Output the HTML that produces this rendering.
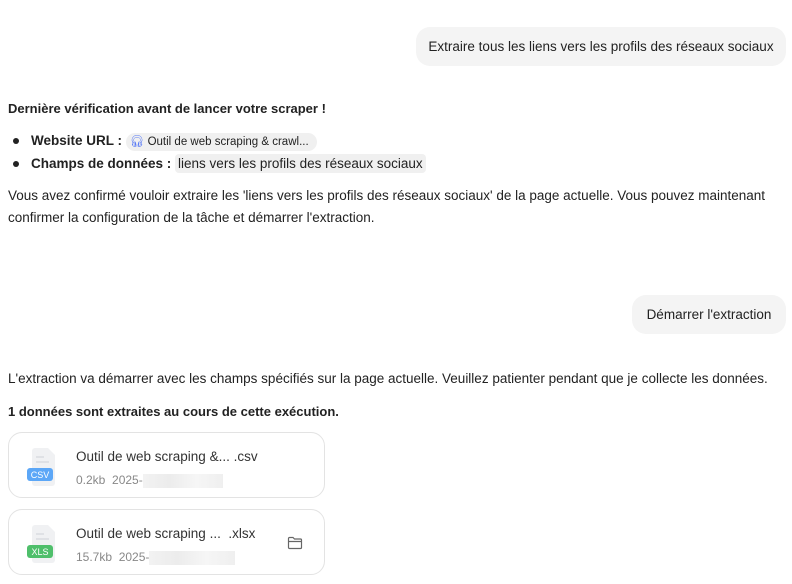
<!DOCTYPE html>
<html><head><meta charset="utf-8"><style>
body{margin:0;width:792px;height:584px;background:#fff;font-family:"Liberation Sans",sans-serif;font-size:13.5px;color:#222;position:relative;overflow:hidden}
.ab{position:absolute;white-space:nowrap}
.bub{background:#f4f4f4;border-radius:14px;height:39px;line-height:39px;padding:0 12px;box-sizing:border-box;text-align:center}
.dot{position:absolute;width:6px;height:6px;border-radius:50%;background:#222}
.tag{background:#f0f0f0;border-radius:10px;padding:2px 6px}
.card{position:absolute;left:8px;width:317px;height:66px;border:1px solid #e3e3e3;border-radius:14px;box-sizing:border-box}
.blur{display:inline-block;width:80px;height:14px;background:linear-gradient(90deg,#f2f2f2,#ececec,#f6f6f6,#efefef);vertical-align:middle}
</style></head><body>
<div class="ab bub" style="left:416px;top:27px;width:370px">Extraire tous les liens vers les profils des réseaux sociaux</div>
<div class="ab" style="left:8px;top:101px;font-weight:bold;font-size:13px">Dernière vérification avant de lancer votre scraper !</div>
<div class="dot" style="left:13px;top:138px"></div>
<div class="ab" style="left:31px;top:131px;line-height:20px"><b>Website URL :</b> <span class="tag" style="font-size:11.5px;padding:3px 8px 3px 4px"><span style="color:#5b7cf5">&#x1F3A7;&#xFE0E;</span> Outil de web scraping &amp; crawl...</span></div>
<div class="dot" style="left:13px;top:161px"></div>
<div class="ab" style="left:31px;top:154px;line-height:20px"><b>Champs de données :</b> <span class="tag" style="border-radius:4px;padding:2px 3px">liens vers les profils des réseaux sociaux</span></div>
<div class="ab" style="left:8px;top:185px;line-height:22px">Vous avez confirmé vouloir extraire les 'liens vers les profils des réseaux sociaux' de la page actuelle. Vous pouvez maintenant<br>confirmer la configuration de la tâche et démarrer l'extraction.</div>
<div class="ab bub" style="left:632px;top:295px;width:154px">Démarrer l'extraction</div>
<div class="ab" style="left:8px;top:371px">L'extraction va démarrer avec les champs spécifiés sur la page actuelle. Veuillez patienter pendant que je collecte les données.</div>
<div class="ab" style="left:8px;top:404px;font-weight:bold;font-size:13px">1 données sont extraites au cours de cette exécution.</div>
<div class="card" style="top:432px">
<svg class="ab" style="left:17px;top:14px" width="32" height="40"><path d="M9 1h13l7 7v28a3 3 0 0 1-3 3H9a3 3 0 0 1-3-3V4a3 3 0 0 1 3-3z" fill="#f0f1f3"/><rect x="10" y="9" width="8" height="2" fill="#dfe1e5"/><rect x="10" y="14" width="13" height="2" fill="#dfe1e5"/><rect x="1" y="21" width="26" height="13" rx="3" fill="#5ca7f7"/><text x="14" y="31" font-size="9" fill="#fff" text-anchor="middle" font-family="Liberation Sans">CSV</text></svg>
<div class="ab" style="left:67px;top:16px;color:#333">Outil de web scraping &amp;... .csv</div>
<div class="ab" style="left:67px;top:40px;font-size:12px;color:#888">0.2kb&nbsp; 2025-<span class="blur"></span></div>
</div>
<div class="card" style="top:509px">
<svg class="ab" style="left:17px;top:14px" width="32" height="40"><path d="M9 1h13l7 7v28a3 3 0 0 1-3 3H9a3 3 0 0 1-3-3V4a3 3 0 0 1 3-3z" fill="#f0f1f3"/><rect x="10" y="9" width="8" height="2" fill="#dfe1e5"/><rect x="10" y="14" width="13" height="2" fill="#dfe1e5"/><rect x="1" y="21" width="26" height="13" rx="3" fill="#4fbf6b"/><text x="14" y="31" font-size="9" fill="#fff" text-anchor="middle" font-family="Liberation Sans">XLS</text></svg>
<div class="ab" style="left:67px;top:16px;color:#333">Outil de web scraping ... &nbsp;.xlsx</div>
<div class="ab" style="left:67px;top:40px;font-size:12px;color:#888">15.7kb&nbsp; 2025-<span class="blur" style="width:86px"></span></div>
<svg class="ab" style="left:278px;top:26px" width="16" height="14"><path d="M1.5 2.5a1 1 0 0 1 1-1h3.5l1.5 1.5h6a1 1 0 0 1 1 1v7.5a1 1 0 0 1-1 1h-11a1 1 0 0 1-1-1zM1.5 5.5h13" fill="none" stroke="#666" stroke-width="1.2"/></svg>
</div>
</body></html>
